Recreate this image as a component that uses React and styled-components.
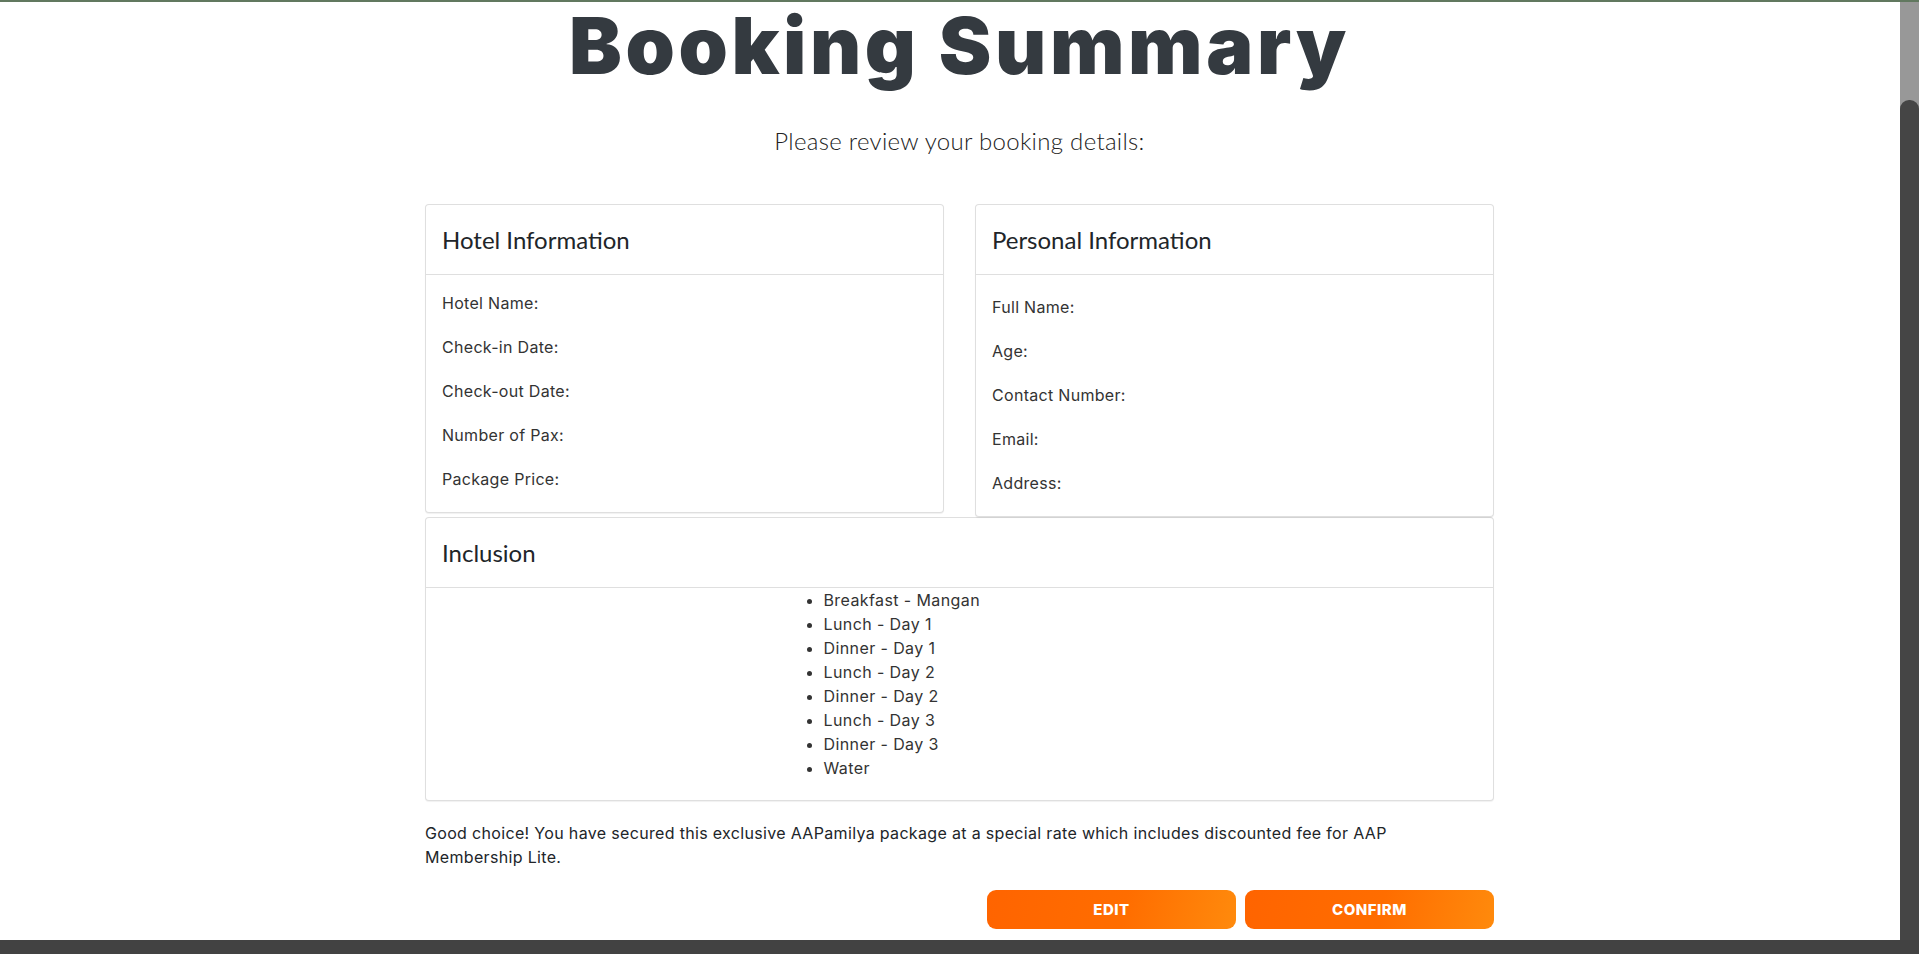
import React, { useEffect, useRef } from "react";
import styled, { createGlobalStyle } from "styled-components";

const GlobalStyle = createGlobalStyle`
  html, body {
    margin: 0;
    padding: 0;
    height: 100%;
    overflow: hidden;
    background: #fff;
  }
  body {
    font-family: Inter, "Liberation Sans", sans-serif;
    color: #212529;
  }
  * {
    box-sizing: border-box;
  }
`;

// browser frame: page viewport plus the two scroll bars of the screenshot
const Frame = styled.div`
  height: 100vh;
  border-top: 2px solid #61785f;
  display: grid;
  grid-template-columns: minmax(0, 1fr) 19px;
  grid-template-rows: minmax(0, 1fr) 14px;
  overflow: hidden;
`;

const Viewport = styled.div`
  overflow: hidden;
  background: #fff;
`;

const VTrack = styled.div`
  background: #989898;
  padding-top: 98px;
  display: flex;
  flex-direction: column;
`;

const VThumb = styled.div`
  flex: 1;
  background: #454545;
  border-radius: 9px 9px 0 0;
`;

const HTrack = styled.div`
  grid-column: 1 / span 2;
  background: #424242;
`;

const Page = styled.div`
  width: 1919px;
  padding: 108px 0 11px;
`;

const Title = styled.h1`
  margin: 0;
  text-align: center;
  font-family: Inter, "Liberation Sans", sans-serif;
  font-weight: 900;
  font-size: 79px;
  line-height: 91px;
  color: #343a40;
  letter-spacing: 3.6px;
`;

const Lead = styled.p`
  margin: 35px 0 0;
  text-align: center;
  font-family: Lato, "Open Sans", sans-serif;
  font-weight: 300;
  font-size: 24px;
  line-height: 30px;
  letter-spacing: 0.3px;
  color: #222;
`;

const Content = styled.div`
  width: 1069px;
  margin: 48px auto 0;
`;

const CardRow = styled.div`
  display: grid;
  grid-template-columns: 519px 519px;
  column-gap: 31px;
  align-items: start;
`;

const Card = styled.section`
  background: #fff;
  border: 1px solid rgba(0, 0, 0, 0.125);
  border-radius: 4px;
  box-shadow: 0 1px 1px rgba(0, 0, 0, 0.06);
`;

const CardHeader = styled.div`
  height: 70px;
  padding: 0 16px;
  display: flex;
  align-items: center;
  border-bottom: 1px solid rgba(0, 0, 0, 0.125);
`;

const CardTitle = styled.h4`
  margin: 0;
  font-family: Lato, "Open Sans", sans-serif;
  font-weight: 400;
  font-size: 24px;
  line-height: 28px;
  color: #212529;
`;

const CardBody = styled.div`
  display: flex;
  flex-direction: column;
  gap: 20px;
  padding: ${(p) => 16 + (p.$offset || 0)}px 16px 21px;
`;

const Field = styled.div`
  font-size: 16px;
  line-height: 24px;
  letter-spacing: 0.3px;
  color: #333;
`;

const InclusionBody = styled.div`
  display: flex;
  justify-content: center;
`;

const InclusionList = styled.ul`
  width: 336px;
  margin: 0 0 20px;
  padding-left: 32px;
  list-style: disc;
  font-size: 16px;
  line-height: 24px;
  letter-spacing: 0.4px;
  color: #333;
`;

const Note = styled.p`
  max-width: 1010px;
  margin: 20px 0 0;
  font-size: 16px;
  line-height: 24px;
  letter-spacing: 0.33px;
  color: #212529;
`;

const Actions = styled.div`
  display: flex;
  justify-content: flex-end;
  gap: 9px;
  margin-top: 21px;
`;

const ActionButton = styled.button`
  width: 249px;
  height: 39px;
  border: none;
  border-radius: 9px;
  background: linear-gradient(100deg, #ff6400 0%, #ff6d00 55%, #ff8a0c 100%);
  color: #fff;
  font-family: Inter, "Liberation Sans", sans-serif;
  font-weight: 800;
  font-size: 15px;
  letter-spacing: 0.5px;
  text-transform: uppercase;
  cursor: pointer;
`;

const hotelFields = [
  "Hotel Name:",
  "Check-in Date:",
  "Check-out Date:",
  "Number of Pax:",
  "Package Price:",
];

const personalFields = [
  "Full Name:",
  "Age:",
  "Contact Number:",
  "Email:",
  "Address:",
];

const inclusions = [
  "Breakfast - Mangan",
  "Lunch - Day 1",
  "Dinner - Day 1",
  "Lunch - Day 2",
  "Dinner - Day 2",
  "Lunch - Day 3",
  "Dinner - Day 3",
  "Water",
];

const InfoCard = ({ title, fields, offset }) => (
  <Card>
    <CardHeader>
      <CardTitle>{title}</CardTitle>
    </CardHeader>
    <CardBody $offset={offset}>
      {fields.map((f) => (
        <Field key={f}>
          {f} <span></span>
        </Field>
      ))}
    </CardBody>
  </Card>
);

export default function App() {
  const viewRef = useRef(null);

  useEffect(() => {
    const el = viewRef.current;
    if (el) el.scrollTop = el.scrollHeight;
  }, []);

  return (
    <>
      <GlobalStyle />
      <Frame>
        <Viewport ref={viewRef}>
          <Page>
            <Title>Booking Summary</Title>
            <Lead>Please review your booking details:</Lead>
            <Content>
              <CardRow>
                <InfoCard title="Hotel Information" fields={hotelFields} />
                <InfoCard
                  title="Personal Information"
                  fields={personalFields}
                  offset={4}
                />
              </CardRow>
              <Card>
                <CardHeader>
                  <CardTitle>Inclusion</CardTitle>
                </CardHeader>
                <InclusionBody>
                  <InclusionList>
                    {inclusions.map((item) => (
                      <li key={item}>{item}</li>
                    ))}
                  </InclusionList>
                </InclusionBody>
              </Card>
              <Note>
                Good choice! You have secured this exclusive AAPamilya package
                at a special rate which includes discounted fee for AAP
                Membership Lite.
              </Note>
              <Actions>
                <ActionButton type="button">Edit</ActionButton>
                <ActionButton type="button">Confirm</ActionButton>
              </Actions>
            </Content>
          </Page>
        </Viewport>
        <VTrack>
          <VThumb />
        </VTrack>
        <HTrack />
      </Frame>
    </>
  );
}
